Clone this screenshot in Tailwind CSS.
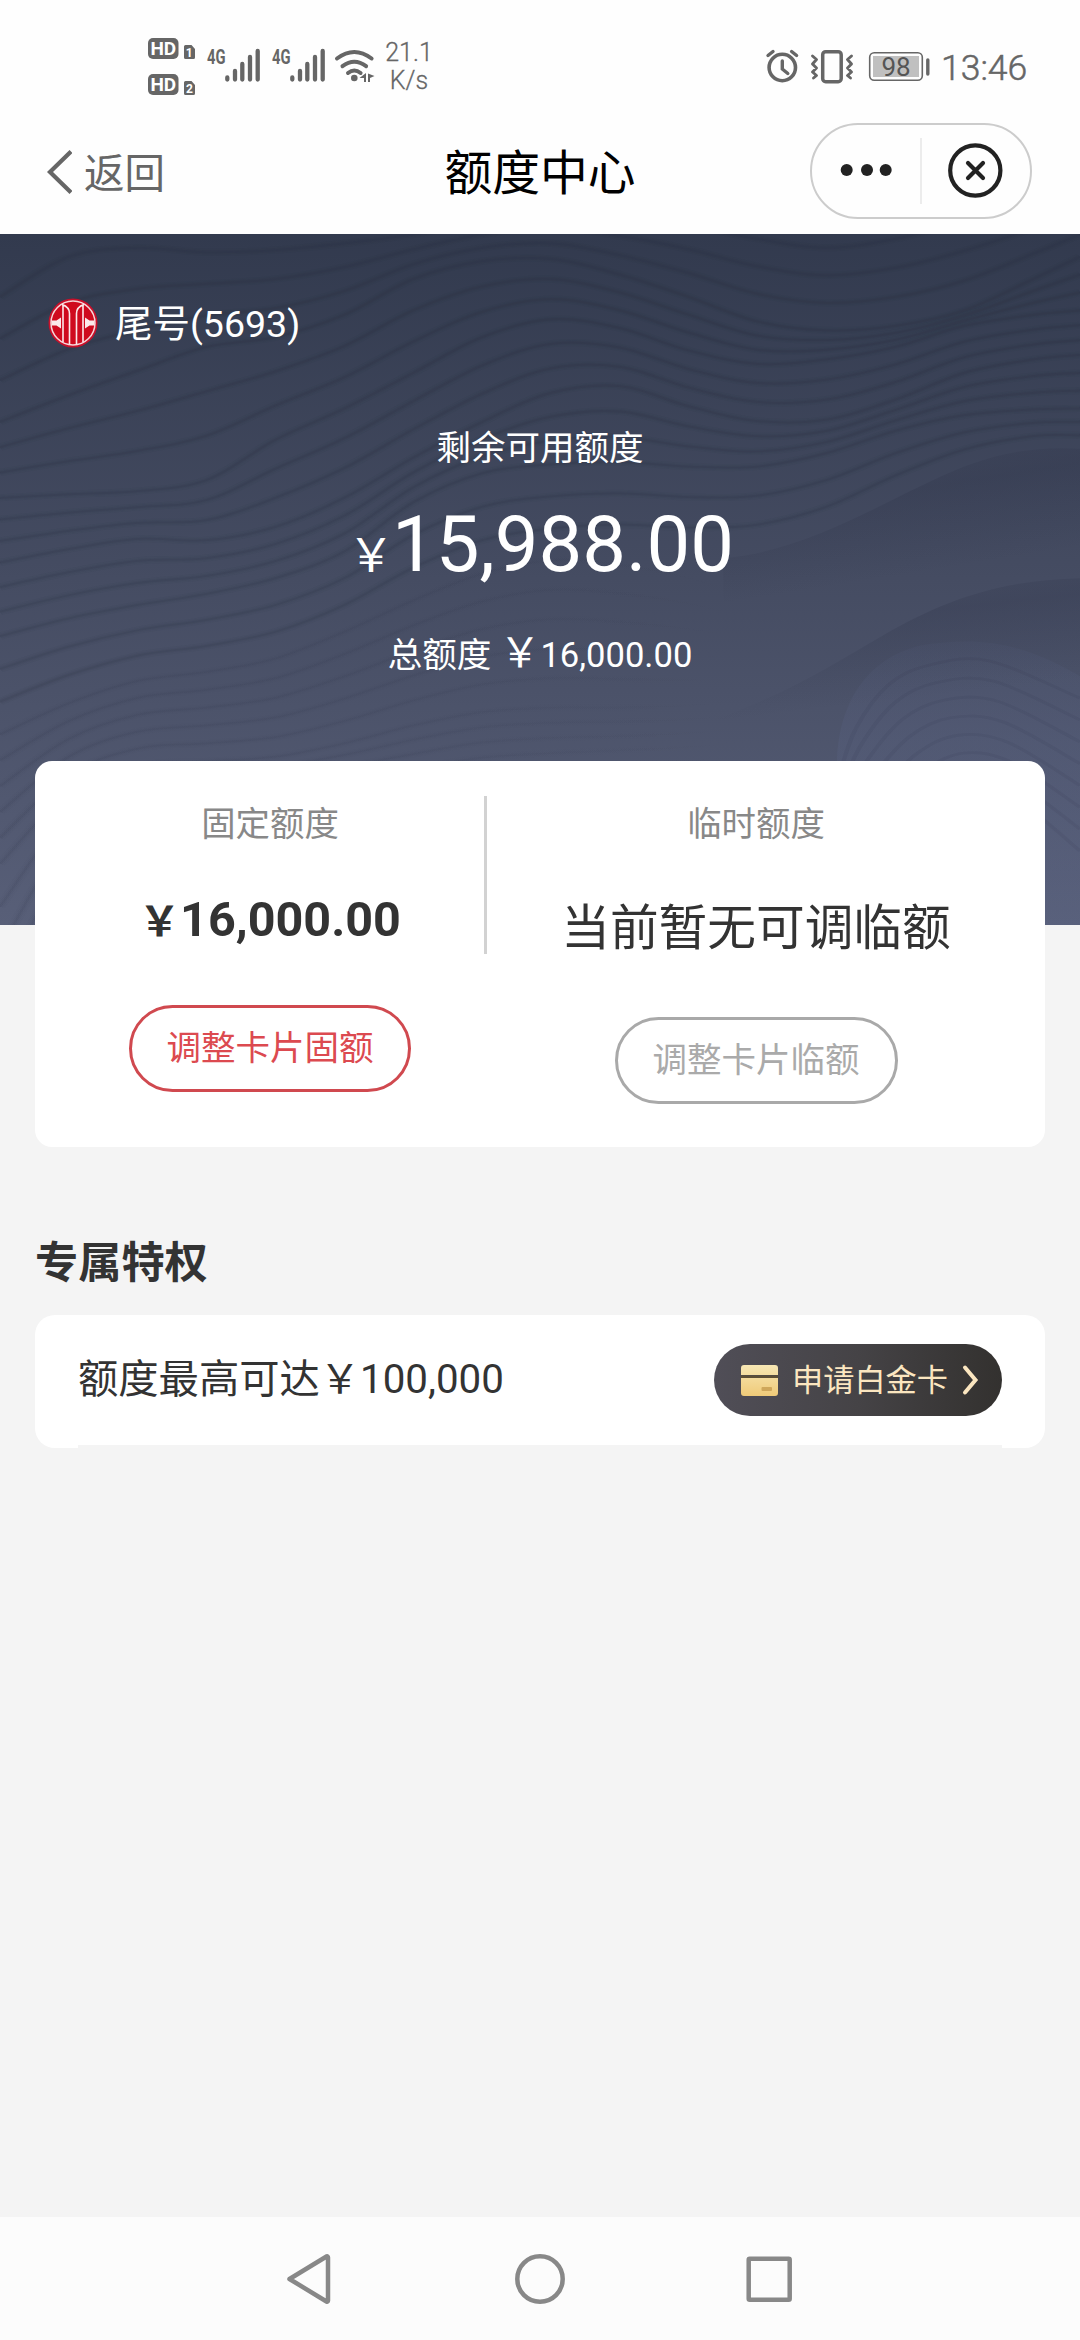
<!DOCTYPE html>
<html lang="zh-CN">
<head>
<meta charset="utf-8">
<title>额度中心</title>
<script src="https://cdn.jsdelivr.net/npm/@tailwindcss/browser@4"></script>
</head>
<body class="w-[1080px] h-[2340px] overflow-hidden flex flex-col bg-[#f4f4f4] font-['Roboto','Noto_Sans_CJK_SC',sans-serif] text-[#333]">

<!-- Status bar -->
<header class="h-[110px] shrink-0 bg-[#fefefe] flex items-start text-[#666]">
  <svg class="w-[240px] h-[110px] ml-[140px]" viewBox="140 0 240 110" fill="#666">
    <rect x="148" y="38" width="30.5" height="21" rx="5"/>
    <rect x="148" y="74" width="30.5" height="21" rx="5"/>
    <g fill="#fff" font-family="Roboto" font-weight="700" font-size="19" text-anchor="middle">
      <text x="163.3" y="55.3">HD</text><text x="163.3" y="91.3">HD</text>
    </g>
    <path d="M185.500 45h6l3.500 4v8.500a1.500 1.500 0 0 1-1.500 1.500h-8a1.500 1.500 0 0 1-1.500-1.500v-11a1.500 1.500 0 0 1 1.500-1.500zM185.500 81h6l3.500 4v8.500a1.500 1.500 0 0 1-1.500 1.500h-8a1.500 1.500 0 0 1-1.500-1.500v-11a1.500 1.500 0 0 1 1.500-1.500z"/>
    <g fill="#fff" font-family="Roboto" font-weight="700" font-size="12" text-anchor="middle">
      <text x="189.300" y="56.500">1</text><text x="189.500" y="92.500">2</text>
    </g>
    <g font-family="Roboto" font-weight="700" font-size="20">
      <text x="207" y="63.500" textLength="18.500" lengthAdjust="spacingAndGlyphs">4G</text>
      <text x="272" y="63.500" textLength="18.500" lengthAdjust="spacingAndGlyphs">4G</text>
    </g>
    <g stroke="#666" stroke-width="4.300" stroke-linecap="round">
      <path d="M227.300 77.500v2M235 71v8.500M242.300 64v15.500M250 57v22.500M257.700 51v28.500"/>
      <path d="M292.300 77.500v2M300 71v8.500M307.300 64v15.500M315 57v22.500M322.700 51v28.500"/>
    </g>
    <g fill="none" stroke="#666" stroke-width="4" stroke-linecap="round">
      <path d="M337 58.500q17.300-13 34.600 0M342.500 66.200q11.800-9 23.600 0M348 73q6.300-5 12.600 0"/>
    </g>
    <circle cx="354.300" cy="78" r="3.300"/>
    <path d="M366 73v9h-2v-4h-4.500zM368 73.500v8.500h2v-4l4.500-2z"/>
  </svg>
  <div class="w-[58px] pt-[39px] text-center text-[25px] leading-[28px] font-light [-webkit-text-stroke:0.3px_#666]">21.1<br>K/s</div>
  <div class="flex-1"></div>
  <svg class="w-[180px] h-[110px]" viewBox="760 0 180 110" fill="none" stroke="#666">
    <circle cx="782.300" cy="67.500" r="13.200" stroke-width="3.600"/>
    <path d="M782.300 61v8l5.500 4.500M768 55.500l5-4M796.600 55.500l-5-4" stroke-width="3.400" stroke-linecap="round"/>
    <rect x="822.700" y="51.700" width="18.500" height="30" rx="3" stroke-width="3.500"/>
    <path d="M812.500 56l4 3.500-4 4.500 4 4-4 4 4 3.500-3 2.500M851.500 56l-4 3.500 4 4.500-4 4 4 4-4 3.500 3 2.500" stroke-width="2.900" stroke-linecap="round" stroke-linejoin="round"/>
    <rect x="869.700" y="52.700" width="52.600" height="27.600" rx="4.500" stroke-width="1.600"/>
    <rect x="873" y="56" width="46" height="21" fill="#c0c0c0" stroke="none"/>
    <path d="M927.800 60v14" stroke-width="3.400" stroke-linecap="round"/>
    <text x="896" y="75.800" fill="#555" stroke="none" font-family="Roboto" font-size="26" text-anchor="middle">98</text>
  </svg>
  <div class="w-[140px] pt-[47px] text-[35.500px] leading-[42px] pl-[1px] font-light [-webkit-text-stroke:0.5px_#666]">13:46</div>
</header>

<!-- Title bar -->
<nav class="relative h-[124px] shrink-0 bg-[#fefefe] flex items-start justify-between">
  <div class="flex items-center h-[124px] pl-[46px] gap-[12px] text-[#666] text-[40.500px]">
    <svg class="w-[26px] h-[44px]" viewBox="0 0 26 44" fill="none" stroke="#666" stroke-width="4.200"><path d="M25 1.500L4 22l21 20.500"/></svg>
    <span class="leading-[50px] pt-[3px]">返回</span>
  </div>
  <h1 class="absolute left-1/2 -translate-x-1/2 top-[33px] text-[47.800px] leading-[62px] text-black whitespace-nowrap">额度中心</h1>
  <div class="mt-[13px] mr-[48px] w-[222px] h-[96px] rounded-full border-2 border-[#ccc] flex items-center">
    <svg class="w-[218px] h-[92px]" viewBox="812 125 218 92">
      <g fill="#222"><circle cx="846.700" cy="170" r="6"/><circle cx="867" cy="170" r="6"/><circle cx="885.700" cy="170" r="6"/></g>
      <path d="M921 138v66" stroke="#ececec" stroke-width="2"/>
      <g fill="none" stroke="#222" stroke-width="4.200" stroke-linecap="round"><circle cx="975.300" cy="170.500" r="25.100"/><path d="M968 163l15 15M983 163l-15 15"/></g>
    </svg>
  </div>
</nav>

<!-- Available limit -->
<section class="relative h-[691px] shrink-0 bg-linear-to-b from-[#323a4e] via-[#454c62] to-[#585f78] text-white flex flex-col">
  <svg id="waves" class="absolute inset-0 w-full h-full" viewBox="0 9 1568 1548" preserveAspectRatio="none" fill="none">
    <defs>
      <linearGradient id="fold" x1="0.2" y1="0" x2="0.45" y2="1"><stop offset="0" stop-color="#262b40" stop-opacity="0"/><stop offset=".25" stop-color="#262b40" stop-opacity=".2"/><stop offset=".6" stop-color="#262b40" stop-opacity="0"/></linearGradient>
      <linearGradient id="fade" gradientUnits="userSpaceOnUse" x1="0" y1="0" x2="1150" y2="0"><stop offset="0" stop-color="#23283d"/><stop offset=".5" stop-color="#23283d" stop-opacity=".8"/><stop offset=".95" stop-color="#23283d" stop-opacity="0"/></linearGradient>
      <linearGradient id="hill" x1="0" y1="0" x2="0" y2="1"><stop offset="0" stop-color="#5c668a" stop-opacity="0.08"/><stop offset=".35" stop-color="#5c668a" stop-opacity=".22"/></linearGradient>
    </defs>
    <path fill="url(#fold)" d="M1050 735C1180 720 1300 590 1400 530C1460 495 1510 485 1568 490V1000H1050Z"/>
    <path fill="url(#fold)" d="M850 1160C1050 1130 1180 1000 1280 910C1380 820 1460 785 1568 780V1300H850Z"/>
    <path fill="url(#hill)" d="M1215 1200C1215 1080 1250 960 1340 930C1440 905 1500 940 1568 1000V1560H1215Z"/>
  </svg>
  <div class="relative flex items-center pl-[48px] pt-[62px] gap-[18px] h-[116px] text-[37.500px]">
    <svg class="w-[50px] h-[50px]" viewBox="0 0 50 50" fill="none">
      <circle cx="25" cy="25" r="24.500" fill="#c8102a"/>
      <circle cx="25" cy="25" r="22" stroke="#f6d5d8" stroke-width="1.500" fill="#cf0a1e"/>
      <path d="M14 6.500q7.500 2.500 7.500 9v31M36 6.500q-7.500 2.500-7.500 9v31M15 7.500v36.500M35 7.500v36.500" stroke="#fbe9ea" stroke-width="1.600"/>
      <path d="M3.500 22.500h5l4.500-3v11l-4.500-3h-5zM46.500 22.500h-5l-4.500-3v11l4.500-3h5z" fill="#fbe9ea"/>
    </svg>
    <span class="leading-[50px] pt-[2px] -ml-[1px]">尾号(5693)</span>
  </div>
  <div class="relative mt-[73px] h-[50px] leading-[50px] text-[34.500px] text-center">剩余可用额度</div>
  <div class="relative mt-[27px] h-[90px] flex items-baseline justify-center pl-[2px] leading-[90px]"><span class="text-[46px] -mr-[2px]">￥</span><span class="text-[77.800px]">15,988.00</span></div>
  <div class="relative mt-[38px] h-[50px] leading-[50px] flex items-baseline justify-center text-[34.600px]"><span class="mr-[8px]">总额度</span><span class="text-[41px]">￥</span><span>16,000.00</span></div>
</section>

<main class="flex-1 px-[35px]">
  <!-- Limit card -->
  <section class="relative -mt-[164px] h-[386px] rounded-[17px] bg-white flex">
    <div class="w-[449px] pl-[21px] flex flex-col items-center">
      <div class="mt-[38px] h-[50px] leading-[50px] text-[34.400px] text-[#888]">固定额度</div>
      <div class="mt-[41px] h-[60px] leading-[60px] flex items-baseline font-bold text-[48.500px]"><span class="text-[41px]">￥</span><span>16,000.00</span></div>
      <button class="mt-[55px] w-[282px] h-[87px] rounded-full border-3 border-[#d0494f] text-[#dc4a50] text-[34.500px] leading-[50px] pb-[1px]">调整卡片固额</button>
    </div>
    <div class="mt-[35px] w-[3px] h-[158px] bg-[#d2d2d2]"></div>
    <div class="flex-1 pr-[20px] flex flex-col items-center">
      <div class="mt-[38px] h-[50px] leading-[50px] text-[34.400px] text-[#888]">临时额度</div>
      <div class="mt-[47px] h-[66px] leading-[66px] text-[48.700px]">当前暂无可调临额</div>
      <button class="mt-[55px] w-[283px] h-[87px] rounded-full border-3 border-[#a9a9a9] text-[#aaa] text-[34.500px] leading-[50px] pb-[1px]">调整卡片临额</button>
    </div>
  </section>

  <!-- Privileges -->
  <h2 class="mt-[87px] h-[60px] leading-[60px] text-[43.200px] font-bold">专属特权</h2>
  <section class="relative mt-[21px] h-[133px] rounded-[20px] bg-white flex items-start justify-between pl-[43px] pr-[43px]">
    <div class="mt-[37px] leading-[56px] text-[40.300px] whitespace-nowrap">额度最高可达￥100,000</div>
    <button class="mt-[29px] w-[288px] h-[72px] rounded-full bg-linear-to-r from-[#504e57] via-[#454346] to-[#33312f] flex items-center pl-[27px] text-[#fbe6c0]">
      <svg class="w-[37px] h-[31px]" viewBox="0 0 37 31">
        <defs><linearGradient id="gold" x1="0" y1="0" x2="0" y2="1"><stop offset="0" stop-color="#f7e7b4"/><stop offset="1" stop-color="#efca78"/></linearGradient></defs>
        <path fill="url(#gold)" d="M3 0h31a3 3 0 0 1 3 3v7H0V3a3 3 0 0 1 3-3zM0 13h37v15a3 3 0 0 1-3 3H3a3 3 0 0 1-3-3z"/>
        <path fill="#5d4f35" d="M0 10.500h37v2.500H0z"/><rect x="20.500" y="22" width="10.500" height="4" rx="1" fill="#cfa75a"/>
      </svg>
      <span class="ml-[14px] text-[31.200px] leading-[44px] pt-[2px] whitespace-nowrap">申请白金卡</span>
      <svg class="ml-[13px] w-[18px] h-[32px]" viewBox="0 0 18 32" fill="none" stroke="#fbe6c0" stroke-width="4" stroke-linecap="round"><path d="M4 3.500l10.500 12.500L4 28.500"/></svg>
    </button>
    <div class="absolute left-[43px] right-[43px] bottom-0 h-[3px] bg-[#f4f4f4]"></div>
  </section>
</main>

<!-- System navigation -->
<footer class="h-[123px] shrink-0 bg-[#fcfcfc]">
  <svg class="w-full h-full" viewBox="0 2217 1080 123" fill="none" stroke="#888" stroke-width="4.500" stroke-linejoin="round">
    <path d="M289.500 2279l37-22.500q1.500-.5 1.500 1v43q0 1.500-1.500 1z"/>
    <circle cx="540" cy="2279" r="22.700"/>
    <rect x="748.700" y="2258.700" width="41" height="41" rx="1"/>
  </svg>
</footer>

<script>
  // Contour lines: each family is interpolated between neighbouring key curves.
  const xs = [0, 100, 200, 300, 400, 500, 600, 700, 800, 900, 1000, 1100, 1200, 1300, 1400, 1500, 1568];
  const keys = [
    [150, 60, 40, 50, 45, 30, 10, -20, -40, -30, -10, 20, 40, 20, -20, -60, -90],
    [430, 370, 315, 262, 240, 190, 110, 70, 65, 100, 150, 205, 225, 215, 180, 110, 60],
    [600, 592, 585, 560, 470, 400, 320, 240, 200, 220, 270, 300, 290, 262, 215, 190, 180],
    [745, 715, 692, 695, 665, 600, 510, 430, 365, 350, 395, 428, 425, 380, 320, 290, 280],
    [910, 870, 840, 815, 780, 720, 610, 545, 525, 520, 530, 530, 500, 450, 415, 402, 400],
    [1130, 1060, 1010, 990, 960, 900, 830, 770, 740, 730, 735, 725, 680, 600, 530, 492, 490],
  ];
  const low = [
    [1130, 1060, 1010, 990, 960, 900, 830, 770, 740, 750, 780, 830],
    [1420, 1260, 1200, 1190, 1180, 1150, 1110, 1080, 1070, 1070, 1065, 1050],
    [1900, 1500, 1350, 1300, 1290, 1280, 1270, 1250, 1240, 1230, 1220, 1210],
  ];
  const hill = [
    [[1215, 1200], [1235, 1080], [1280, 980], [1340, 935], [1430, 920], [1568, 1000]],
    [[1225, 1500], [1300, 1420], [1370, 1330], [1430, 1290], [1490, 1330], [1568, 1440]],
  ];
  const svg = document.getElementById('waves');
  function smooth(p) {
    let d = 'M' + p[0];
    for (let i = 0; i < p.length - 1; i++) {
      const a = p[i - 1] || p[i], b = p[i], c = p[i + 1], e = p[i + 2] || c;
      d += 'C' + [b[0] + (c[0] - a[0]) / 6, b[1] + (c[1] - a[1]) / 6, c[0] - (e[0] - b[0]) / 6, c[1] - (e[1] - b[1]) / 6, c[0], c[1]];
    }
    return d;
  }
  function line(p, o, w, paint = '#23283d') {
    const el = document.createElementNS('http://www.w3.org/2000/svg', 'path');
    el.setAttribute('d', smooth(p));
    el.setAttribute('stroke', paint);
    el.setAttribute('stroke-opacity', o);
    el.setAttribute('stroke-width', w);
    svg.appendChild(el);
  }
  function family(ks, n, o, paint) {
    for (let k = 0; k < ks.length - 1; k++)
      for (let j = 0; j < n; j++) {
        const t = j / n;
        const p = ks[k].map((y, i) => [xs[i], y + (ks[k + 1][i] - y) * t]);
        line(p, o, 4, paint);
        line(p, o * .5, 9, paint);
        line(p, o * .4, 16, paint);
      }
  }
  family(keys, 3, .1);
  family(low, 5, .07, 'url(#fade)');
  for (let j = 1; j < 9; j++) line(hill[0].map((a, i) => [0, 1].map(c => a[c] + (hill[1][i][c] - a[c]) * j / 9)), .08, 6);
</script>
</body>
</html>
